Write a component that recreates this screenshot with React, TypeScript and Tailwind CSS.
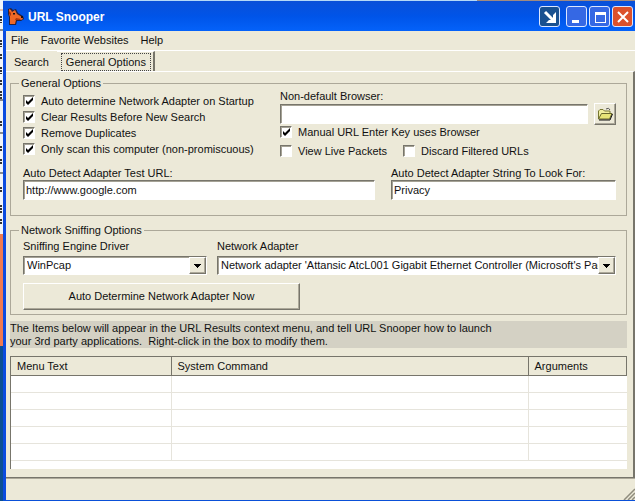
import { useState } from 'react';
import type { ReactNode } from 'react';

const menus = ['File', 'Favorite Websites', 'Help'];
const rows = [1, 2, 3, 4, 5];

const sunken = 'border border-t-[#77756b] border-l-[#77756b] border-b-white border-r-white bg-white shadow-[inset_1px_1px_0_#a5a295]';
const raised = 'border border-t-white border-l-white border-b-[#77756b] border-r-[#77756b] bg-[#ece9d8] shadow-[inset_-1px_-1px_0_#aca899]';

function Check({ label, checked = false }: { label: string; checked?: boolean }) {
  const [on, setOn] = useState(checked);
  return (
    <label className="flex items-center gap-1.5 whitespace-nowrap">
      <span className="grid">
        <input
          type="checkbox"
          checked={on}
          onChange={() => setOn(!on)}
          className={`peer col-start-1 row-start-1 size-3 appearance-none ${sunken}`}
        />
        <svg viewBox="0 0 12 12" className="pointer-events-none invisible col-start-1 row-start-1 size-3 peer-checked:visible">
          <path d="M3 5v3l2 2 5-5V2L5 7z" fill="#000" />
        </svg>
      </span>
      {label}
    </label>
  );
}

function TextField({ id, label, value = '', children }: { id: string; label: string; value?: string; children?: ReactNode }) {
  return (
    <div className="flex flex-col">
      <label htmlFor={id} className="leading-3.5">{label}</label>
      <div className="flex items-center gap-1.5">
        <input id={id} defaultValue={value} className={`h-5 min-w-0 flex-1 px-0.5 outline-none ${sunken}`} />
        {children}
      </div>
    </div>
  );
}

function Dropdown({ id, label, value }: { id: string; label: string; value: string }) {
  return (
    <div className="flex min-w-0 flex-col gap-0.5">
      <label htmlFor={id} className="leading-4">{label}</label>
      <div className={`grid grid-cols-[1fr_17px] border-b-[#aca899] border-r-[#77756b] ${sunken}`}>
        <select id={id} className="col-span-2 col-start-1 row-start-1 h-[17px] w-full min-w-0 appearance-none overflow-hidden pr-4 pl-[3px] outline-none">
          <option>{value}</option>
        </select>
        <span className={`pointer-events-none col-start-2 row-start-1 grid place-items-center ${raised}`}>
          <svg viewBox="0 0 7 4" className="h-1 w-[7px]" shapeRendering="crispEdges">
            <path d="M0 0h7L3.5 4z" />
          </svg>
        </span>
      </div>
    </div>
  );
}

function Group({ title, className, children }: { title: string; className: string; children: ReactNode }) {
  return (
    <fieldset className={`min-w-0 border border-[#aca899] pr-2.5 pl-3 ${className}`}>
      <legend className="-ml-1 px-0.5 leading-3">{title}</legend>
      {children}
    </fieldset>
  );
}

function DogIcon() {
  return (
    <svg viewBox="0 0 16 17" className="h-[17px] w-4">
      <path d="M0 1l3-1 2 2 3-1 2 4 5 3 1 3-3 2H9l-1 4H1V9L0 6z" fill="#26203c" />
      <path d="M1 1l2 1 1 2 3-2 2 4 5 3 1 2-2 1H8l-1 4H2V9L1 6z" fill="#ef6826" />
      <path d="M5 5h2v1.500H5zM13 8h2v2h-2z" fill="#1c1010" />
      <path d="M8 10l5 1-1 1H7zM1 3l2 2v3L1 6z" fill="#a8330f" />
    </svg>
  );
}

function FolderIcon() {
  return (
    <svg viewBox="0 0 16 14" className="h-3.5 w-4">
      <path d="M1.500 12V4L3 2.500h3L7.500 4H13v3" fill="#f0eea0" stroke="#77772f" />
      <path d="M1.500 12l3-5.500h10.500L12.500 12z" fill="#e6e477" stroke="#66662b" />
      <path d="M2 13h11l2.500-6" fill="none" stroke="#111" />
      <path d="M9 2q3-2 4 1" fill="none" stroke="#555" />
    </svg>
  );
}

function TitleBar() {
  const button = 'grid size-[21px] place-items-center rounded-[3px] border border-[#dbe6ff]';
  return (
    <header className="-ml-[3px] flex h-[30px] items-center rounded-tl-md bg-linear-to-b from-[#0a50d8] via-[#0054e8] to-[#0462fa] pt-px pr-0.5 pl-[5px]">
      <DogIcon />
      <h1 className="ml-1 flex-1 text-[12px] font-bold text-white">URL Snooper</h1>
      <button aria-label="Send to tray" className={`mr-1.5 bg-[#195090] ${button}`}>
        <svg viewBox="0 0 16 16" className="size-4">
          <path d="M3 3l8 8" fill="none" stroke="#fff" strokeWidth="3" />
          <path d="M14 3v11H4l3-3h2l2-2V6z" fill="#fff" />
        </svg>
      </button>
      <div className="flex gap-0.5">
        <button aria-label="Minimize" className={`bg-[#3568e4] ${button}`}>
          <svg viewBox="0 0 16 16" className="size-4"><path d="M3 11h7v3H3z" fill="#fff" /></svg>
        </button>
        <button aria-label="Maximize" className={`bg-[#3568e4] ${button}`}>
          <svg viewBox="0 0 16 16" className="size-4"><path d="M3 3h11v11H3zM4 6v7h9V6z" fill="#fff" fillRule="evenodd" /></svg>
        </button>
        <button aria-label="Close" className={`bg-[#dc512c] ${button}`}>
          <svg viewBox="0 0 16 16" className="size-4"><path d="M3 3l10 10M13 3L3 13" stroke="#fff" strokeWidth="2" /></svg>
        </button>
      </div>
    </header>
  );
}

function Desktop() {
  return (
    <div className="flex w-[3px] flex-col">
      <svg viewBox="0 0 3 234" className="h-[234px] w-[3px] bg-[#f2f5fa]">
        <path d="M0 10h3" stroke="#e0905a" />
        <path d="M0 30h3M0 100h3M0 133h3M0 173h3" stroke="#222" />
        <path
          d="M1 16v7M1 40v7M1 54v6M1 67v7M1 80v6M1 91v9M1 121v6M1 146v6M1 159v6M1 187v6M1 205v8M1 219v5"
          stroke="#333"
          strokeWidth="2"
          strokeDasharray="2 1"
        />
      </svg>
      <div className="h-28 bg-[#ee7a50]" />
      <div className="flex-1 bg-[#0b4f94]" />
    </div>
  );
}

export default function App() {
  return (
    <div className="flex min-h-screen bg-[#ece9d8] text-[11px] text-[#111] [font-family:'Liberation_Sans',Arial,sans-serif]">
      <Desktop />

      <div className="flex min-w-0 flex-1 flex-col border-b border-[#0a50d8] bg-[#0a4be0] pl-[3px]">
        <div className="-ml-[3px] flex h-px">
          <div className="flex-3 bg-[#b5d9f7]" />
          <div className="flex-1 bg-[#a08a80]" />
        </div>
        <TitleBar />
        <nav className="flex h-5 items-center gap-3 border-b border-white bg-[#ece9d8] pl-[5px]">
          {menus.map((m) => (
            <button key={m}>{m}</button>
          ))}
        </nav>

        <main className="flex flex-1 flex-col bg-[#ece9d8]">
          <div role="tablist" className="flex h-5 items-end">
            <button role="tab" className="h-[18px] px-2">Search</button>
            <button role="tab" aria-selected="true" className="h-5 border-t border-r-2 border-white border-r-[#77756b] px-1 pr-0.5">
              <span className="block border border-dotted border-[#444] px-1 leading-4">General Options</span>
            </button>
          </div>

          <div className="flex flex-1 flex-col border-t border-r-2 border-b border-t-white border-r-[#77756b] border-b-[#77756b] pr-1.5 pb-2 pl-1">
            <Group title="General Options" className="mt-[5px] pb-[15px]">
              <div className="grid grid-cols-[257px_1fr]">
                <div className="flex flex-col pt-1 leading-4">
                  <Check label="Auto determine Network Adapter on Startup" checked />
                  <Check label="Clear Results Before New Search" checked />
                  <Check label="Remove Duplicates" checked />
                  <Check label="Only scan this computer (non-promiscuous)" checked />
                </div>
                <div className="flex flex-col">
                  <TextField id="browser" label="Non-default Browser:">
                    <button aria-label="Browse" className={`grid size-[22px] place-items-center ${raised}`}>
                      <FolderIcon />
                    </button>
                  </TextField>
                  <div className="leading-3.5">
                    <Check label="Manual URL Enter Key uses Browser" checked />
                  </div>
                  <div className="flex gap-4 leading-6">
                    <Check label="View Live Packets" />
                    <Check label="Discard Filtered URLs" />
                  </div>
                </div>
              </div>
              <div className="mt-[3px] grid grid-cols-[1fr_225px] gap-4">
                <TextField id="testUrl" label="Auto Detect Adapter Test URL:" value="http://www.google.com" />
                <TextField id="lookFor" label="Auto Detect Adapter String To Look For:" value="Privacy" />
              </div>
            </Group>

            <Group title="Network Sniffing Options" className="mt-2 pt-0.5 pb-1">
              <div className="grid grid-cols-[184px_1fr] gap-2.5">
                <Dropdown id="driver" label="Sniffing Engine Driver" value="WinPcap" />
                <Dropdown
                  id="adapter"
                  label="Network Adapter"
                  value="Network adapter 'Attansic AtcL001 Gigabit Ethernet Controller (Microsoft's Packet Scheduler)"
                />
              </div>
              <button className={`mt-2 h-[27px] w-[277px] ${raised}`}>Auto Determine Network Adapter Now</button>
            </Group>

            <p className="mt-1.5 bg-[#d4d1c4] pt-px leading-[13px] whitespace-pre-line">
              The Items below will appear in the URL Results context menu, and tell URL Snooper how to launch
              {'\n'}your 3rd party applications.&nbsp; Right-click in the box to modify them.
            </p>

            <div className="mt-2 flex-1 border-t border-l border-[#77756b] bg-white">
              <table className="w-full table-fixed border-collapse text-left">
                <colgroup>
                  <col className="w-[26%]" />
                  <col />
                  <col className="w-[16%]" />
                </colgroup>
                <thead>
                  <tr className="h-[18px] bg-[#ece9d8]">
                    {['Menu Text', 'System Command', 'Arguments'].map((h) => (
                      <th key={h} className="border-r border-b border-[#77756b] px-1.5 py-0 leading-4 font-normal">{h}</th>
                    ))}
                  </tr>
                </thead>
                <tbody>
                  {rows.map((r) => (
                    <tr key={r} className="h-[17px]">
                      <td className="border-r border-b border-[#e6e4dc] p-0" />
                      <td className="border-r border-b border-[#e6e4dc] p-0" />
                      <td className="border-b border-[#e6e4dc] p-0" />
                    </tr>
                  ))}
                </tbody>
              </table>
            </div>
          </div>
        </main>

        <footer className="flex h-[22px] items-end justify-end border-t border-[#aca899] bg-[#ece9d8]">
          <svg viewBox="0 0 12 12" className="size-3">
            <path d="M1 12L12 1M5 12l7-7M9 12l3-3" stroke="#8f8c7e" strokeWidth="1.500" />
          </svg>
        </footer>
      </div>
    </div>
  );
}
